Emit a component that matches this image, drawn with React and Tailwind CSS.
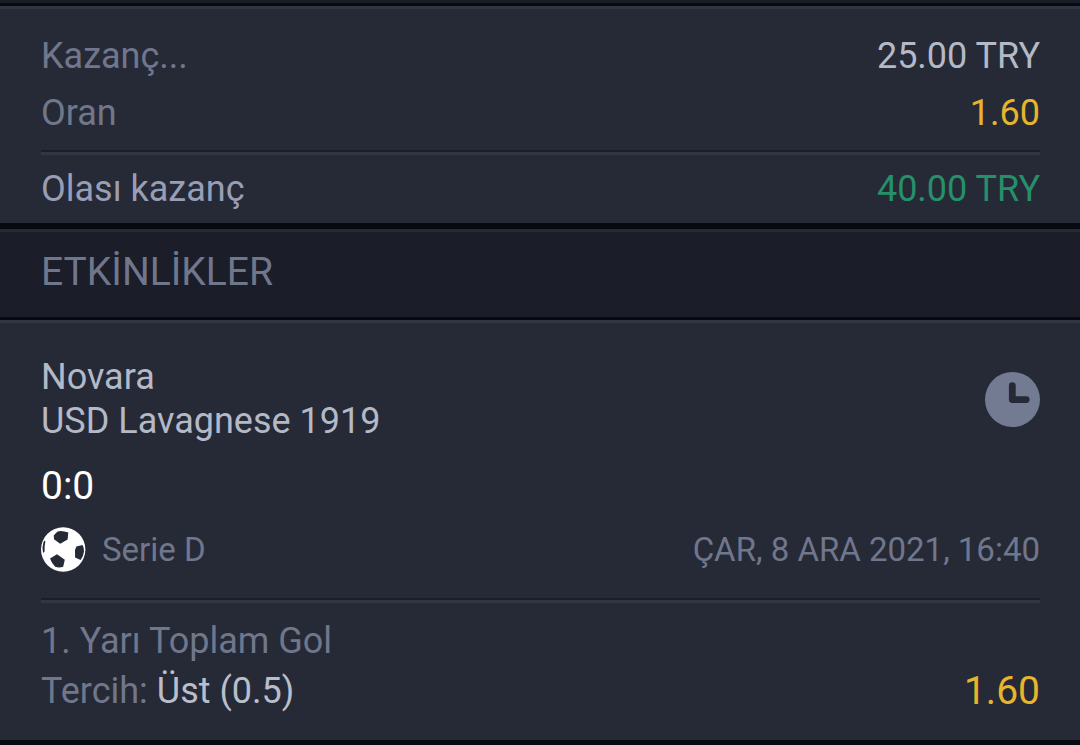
import React from "react";

const BET = {
  stake: "25.00 TRY",
  odds: "1.60",
  possibleWin: "40.00 TRY",
};

const EVENTS = [
  {
    id: 1,
    home: "Novara",
    away: "USD Lavagnese 1919",
    score: "0:0",
    league: "Serie D",
    date: "ÇAR, 8 ARA 2021, 16:40",
    market: "1. Yarı Toplam Gol",
    pick: "Üst (0.5)",
    odds: "1.60",
  },
];

const ClockIcon = () => (
  <svg className="w-[55px] h-[55px] shrink-0" viewBox="0 0 55 55" role="img" aria-label="Bekliyor">
    <circle cx="27.5" cy="27.5" r="27.5" fill="#737b92" />
    <path
      d="M27.3 13.6V27.6H41.2"
      fill="none"
      stroke="#262a36"
      strokeWidth="6.8"
      strokeLinecap="round"
      strokeLinejoin="round"
    />
  </svg>
);

const BallIcon = () => (
  <svg className="w-[45px] h-[45px] shrink-0" viewBox="0 0 45 45" aria-hidden="true">
    <circle cx="22.2" cy="22.5" r="22.2" fill="#ffffff" />
    <g fill="#262a36">
      <path d="M12.8 8.2 16.6 4.4Q21.5 3.4 27.3 5.6L26.6 12.6 19.2 16.8 13 12.2Z" />
      <path d="M35.4 19.4 41.6 17.9Q43 20.5 43 24.5Q42.4 29.6 39.6 32.9L34.1 30.6 34 23Z" />
      <path d="M9 31.6 16 27.2 23.8 32.8 22.2 39.8Q18 41 14.2 39.8Q10.8 36.6 9 31.6Z" />
      <path d="M3.2 13.6 4.4 14.4Q3.2 19.2 3.6 24.4L2.2 26Q0.6 19.4 3.2 13.6Z" />
    </g>
  </svg>
);

const Divider = () => (
  <div className="h-[5px] border-t-2 border-[#1b1e2a] bg-[#323643]" />
);

const SummaryRow = ({ label, value, labelColor, valueColor }) => (
  <div className="flex justify-between text-[36px] leading-[42px]">
    <dt className={labelColor}>{label}</dt>
    <dd className={valueColor}>{value}</dd>
  </div>
);

const EventCard = ({ event }) => (
  <article className="border-t-3 border-[#323643] pt-8 pr-10 pb-6 pl-[41px]">
    <div className="flex items-center justify-between">
      <div className="text-[36px] leading-[44px] text-[#b4b9c8]">
        <p>{event.home}</p>
        <p>{event.away}</p>
      </div>
      <ClockIcon />
    </div>

    <p className="mt-[19px] text-[39px] leading-[48px] text-white">{event.score}</p>

    <div className="mt-[17px] mb-[26px] flex items-center justify-between text-[33px] leading-[42px] text-[#70778c]">
      <div className="flex items-center gap-4">
        <BallIcon />
        <span>{event.league}</span>
      </div>
      <time dateTime="2021-12-08T16:40">{event.date}</time>
    </div>

    <Divider />

    <div className="mt-[13px] flex items-end justify-between">
      <div className="text-[36px] leading-[50px] text-[#70778c]">
        <p>{event.market}</p>
        <p>
          Tercih: <span className="text-[#b9becc]">{event.pick}</span>
        </p>
      </div>
      <span className="text-[39px] leading-[50px] text-[#e7b52c]">{event.odds}</span>
    </div>
  </article>
);

export default function App() {
  return (
    <main className="bg-[#262a36] font-['Roboto',sans-serif]">
      <div className="h-[6px] border-b-3 border-[#080a12] bg-[#1b1d29]" />

      {/* Bet summary */}
      <dl className="border-t-3 border-[#323643] pt-[26px] pr-10 pb-[13px] pl-[41px]">
        <div className="mb-4 flex flex-col gap-[15px]">
          <SummaryRow
            label="Kazanç..."
            value={BET.stake}
            labelColor="text-[#70778c]"
            valueColor="text-[#b4b9c8]"
          />
          <SummaryRow
            label="Oran"
            value={BET.odds}
            labelColor="text-[#70778c]"
            valueColor="text-[#e7b52c]"
          />
        </div>
        <Divider />
        <div className="mt-[13px]">
          <SummaryRow
            label="Olası kazanç"
            value={BET.possibleWin}
            labelColor="text-[#989eb5]"
            valueColor="text-[#259069]"
          />
        </div>
      </dl>

      {/* Events */}
      <section>
        <header className="border-y-[#080a12] border-t-6 border-b-3 bg-[#1b1d29]">
          <h2 className="border-t-3 border-[#262a36] pt-4 pr-10 pb-[21px] pl-[41px] text-[39px] leading-[48px] text-[#70778c]">
            ETKİNLİKLER
          </h2>
        </header>
        {EVENTS.map((event) => (
          <EventCard key={event.id} event={event} />
        ))}
      </section>

      <div className="h-[5px] bg-[#080a12]" />
    </main>
  );
}
